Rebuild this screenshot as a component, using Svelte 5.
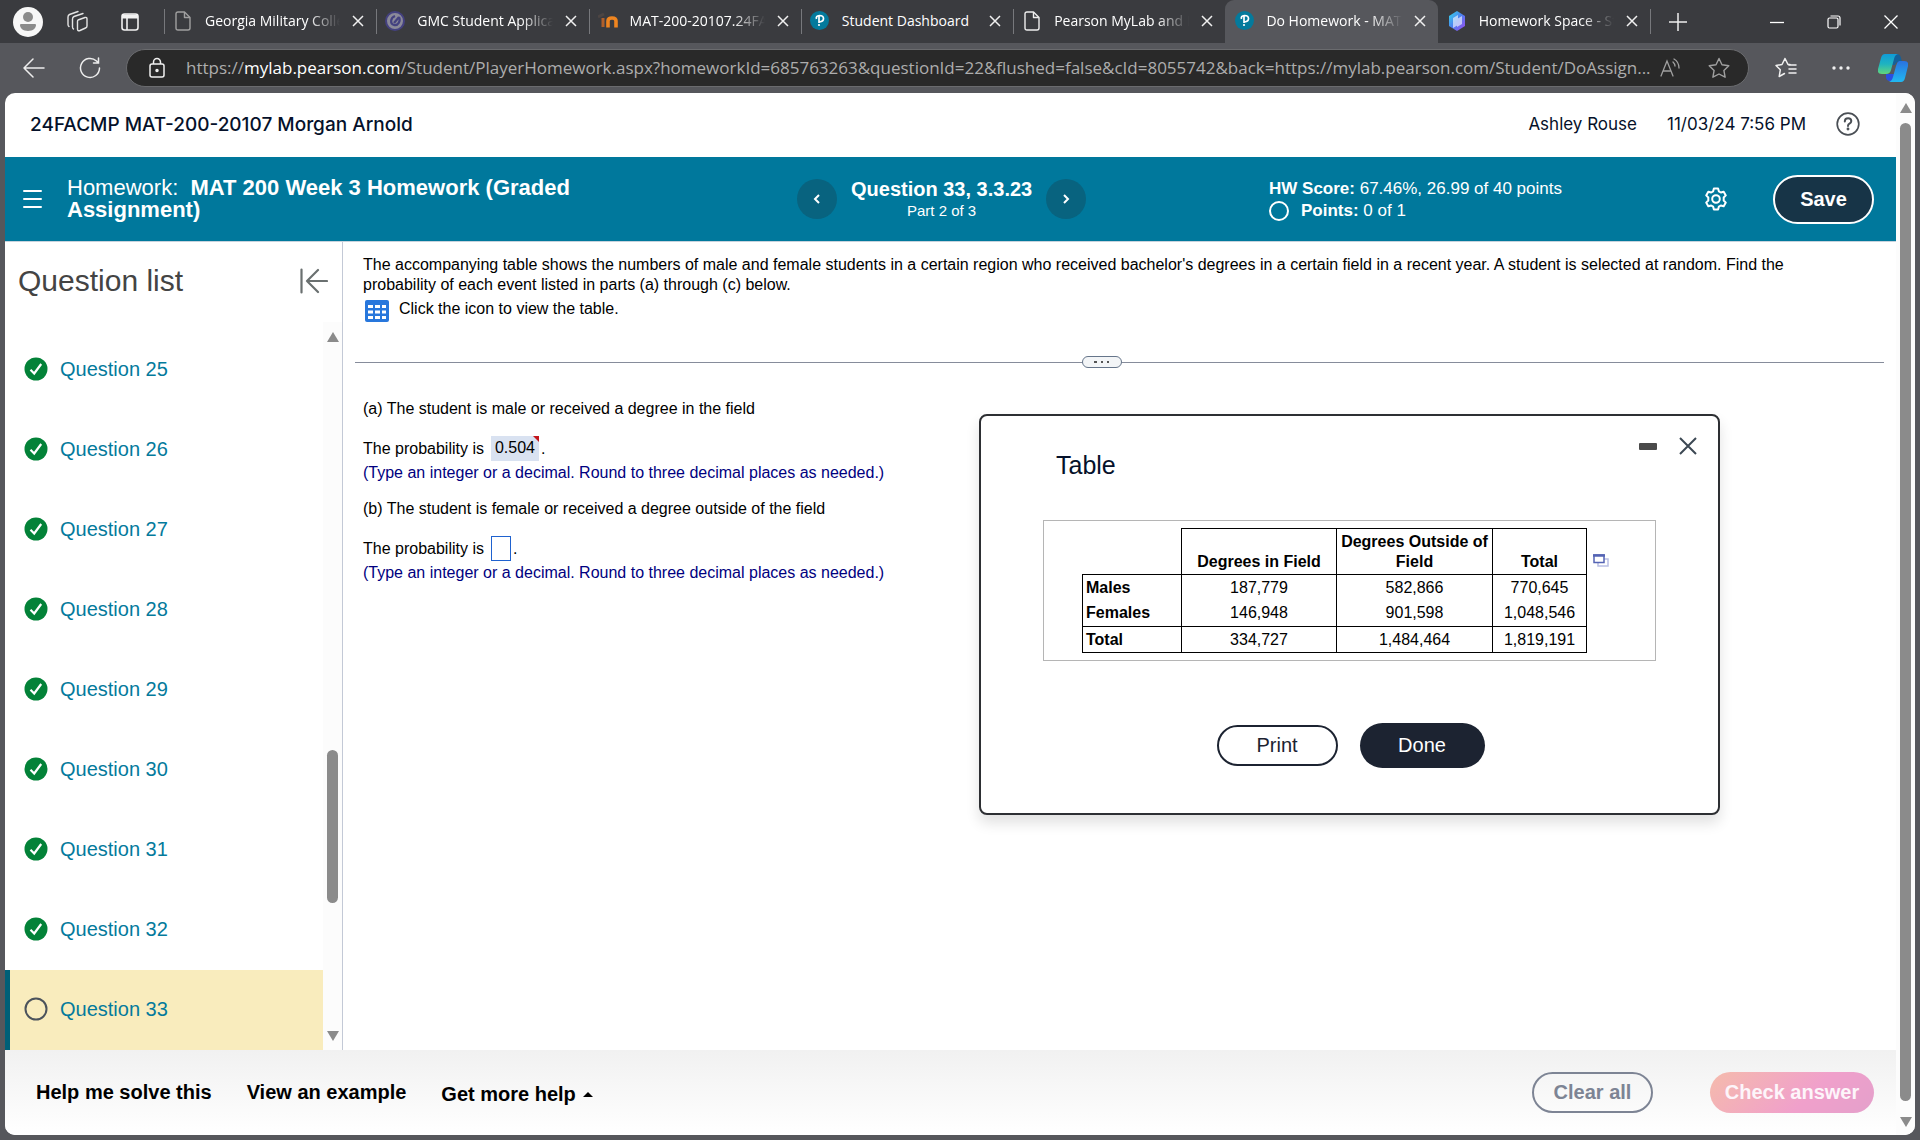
<script>
  const tabs = [
    { title: 'Georgia Military College', icon: 'page', dim: true },
    { title: 'GMC Student Application', icon: 'gmc' },
    { title: 'MAT-200-20107.24FACMP', icon: 'moodle' },
    { title: 'Student Dashboard', icon: 'pearson', whole: true },
    { title: 'Pearson MyLab and Mastering', icon: 'page' },
    { title: 'Do Homework - MAT 200', icon: 'pearson', active: true },
    { title: 'Homework Space - StudyX', icon: 'study' }
  ];

  const questions = [25, 26, 27, 28, 29, 30, 31, 32, 33];
  let current = $state(33);
  let answer = $state('');
  let dialogOpen = $state(true);

  const rows = [
    { label: 'Males', values: ['187,779', '582,866', '770,645'] },
    { label: 'Females', values: ['146,948', '901,598', '1,048,546'] },
    { label: 'Total', values: ['334,727', '1,484,464', '1,819,191'] }
  ];
</script>

<div class="browser">
  <div class="tabbar">
    <div class="tab-tools">
      <button aria-label="Profile">
        <svg width="30" height="30" viewBox="0 0 30 30">
          <circle cx="15" cy="15" r="15" fill="#f7f7f7" />
          <circle cx="15" cy="10" r="5" fill="#8b8b8b" />
          <path d="M8 17h14q1 0 1 1c0 3-3 6-8 6s-8-3-8-6q0-1 1-1z" fill="#8b8b8b" />
        </svg>
      </button>
      <button aria-label="Workspaces">
        <svg width="24" height="24" viewBox="0 0 24 24" fill="none" stroke="#e4e4e4" stroke-width="1.4" stroke-linejoin="round" stroke-linecap="round">
          <path d="M12 10l7-2.500q2-.5 2 1.500v7q0 1.500-1.500 2l-5.500 2.500q-2.500 1-2.500-1.500v-7.500q0-1.200.5-1.500z" />
          <path d="M7.500 19q-1-.5-1-2V9q0-1.800 1.500-2.500L17 3.500" />
          <path d="M3 16.500q-1-.5-1-2V7q0-1.800 1.500-2.500L12 1.500" />
        </svg>
      </button>
      <button aria-label="Tab actions">
        <svg width="20" height="20" viewBox="0 0 20 20" fill="none" stroke="#f2f2f2" stroke-width="1.600">
          <rect x="2" y="2" width="16" height="16" rx="2.500" />
          <path d="M2 4.500h16" stroke-width="4" />
          <path d="M7 6v12" />
        </svg>
      </button>
    </div>

    <div class="tabs">
      {#each tabs as tab}
        <div class="tab" class:active={tab.active}>
          <span class="favicon">
            {#if tab.icon === 'page'}
              <svg width="16" height="20" viewBox="0 0 16 20" fill="none" stroke={tab.dim ? '#a0a0a0' : '#eeeeee'} stroke-width="1.400" stroke-linejoin="round">
                <path d="M3 1h6.500L15 6.500V17q0 2-2 2H3q-2 0-2-2V3q0-2 2-2z" />
                <path d="M9.500 1v5.500H15" />
              </svg>
            {:else if tab.icon === 'gmc'}
              <svg width="20" height="20" viewBox="0 0 20 20" fill="none">
                <circle cx="10" cy="10" r="9" fill="#8b8a99" stroke="#444180" stroke-width="2" />
                <path d="M9 12l5-6M14 6c2 4-1 9-5 8s-4-7 1-9" stroke="#444180" stroke-width="2.200" />
              </svg>
            {:else if tab.icon === 'moodle'}
              <svg width="20" height="16" viewBox="0 0 20 16" fill="none" stroke-width="3">
                <path d="M0 4l6-3" stroke="#4c4543" />
                <path d="M5 5v9" stroke="#b1602a" />
                <path d="M10 14.500V8q0-3 4-3t4 3v6.500" stroke="#ef8520" stroke-width="3.600" />
              </svg>
            {:else if tab.icon === 'pearson'}
              <svg width="19" height="19" viewBox="0 0 19 19" fill="none">
                <circle cx="9.500" cy="9.500" r="9.500" fill="#047a9c" />
                <path d="M9 5v7M6.500 8q-1-3 3-3.500 4 0 4 3T9.500 11" stroke="#fff" stroke-width="1.700" />
                <circle cx="9" cy="14" r="1.100" fill="#fff" />
              </svg>
            {:else}
              <svg width="18" height="20" viewBox="0 0 18 20">
                <defs>
                  <linearGradient id="study" x1="0" y1="0" x2="1" y2="1">
                    <stop offset="0" stop-color="#35dbe8" />
                    <stop offset=".5" stop-color="#4d7df0" />
                    <stop offset="1" stop-color="#a24cf0" />
                  </linearGradient>
                </defs>
                <path d="M9 0l8 5v10l-8 5-8-5V5z" fill="url(#study)" />
                <path d="M5 7l5-3v10l-5 3zM9 8l5-3v8l-5 3z" fill="#fff" opacity=".6" />
              </svg>
            {/if}
          </span>
          <span class="tab-title" class:whole={tab.whole}>{tab.title}</span>
          <button class="tab-close" aria-label="Close tab">
            <svg width="12" height="12" viewBox="0 0 12 12" stroke="#f0f0f0" stroke-width="1.500"><path d="M1 1l10 10M11 1L1 11" /></svg>
          </button>
        </div>
      {/each}
    </div>
    <button class="new-tab" aria-label="New tab">
      <svg width="18" height="18" viewBox="0 0 18 18" stroke="#eee" stroke-width="1.500"><path d="M9 0v18M0 9h18" /></svg>
    </button>

    <div class="window-buttons">
      <button aria-label="Minimize">
        <svg width="14" height="14" viewBox="0 0 14 14" stroke="#fff" stroke-width="1.300"><path d="M0 7.500h14" /></svg>
      </button>
      <button aria-label="Restore">
        <svg width="14" height="14" viewBox="0 0 14 14" fill="none" stroke="#fff" stroke-width="1.200">
          <rect x="1" y="3" width="10" height="10" rx="1.500" />
          <path d="M3.500 1H11q2 0 2 2v7.500" />
        </svg>
      </button>
      <button aria-label="Close window">
        <svg width="14" height="14" viewBox="0 0 14 14" stroke="#fff" stroke-width="1.300"><path d="M.5.5l13 13M13.500.5l-13 13" /></svg>
      </button>
    </div>
  </div>

  <div class="toolbar">
    <button class="nav-btn" aria-label="Back">
      <svg width="22" height="20" viewBox="0 0 22 20" fill="none" stroke="#ededed" stroke-width="1.500" stroke-linecap="round" stroke-linejoin="round"><path d="M21 10H1M10 1L1 10l9 9" /></svg>
    </button>
    <button class="nav-btn" aria-label="Refresh">
      <svg width="22" height="22" viewBox="0 0 22 22" fill="none" stroke="#ededed" stroke-width="1.500" stroke-linecap="round"><path d="M20.500 11a9.500 9.500 0 1 1-3-7l2 2M19.500 1v5h-5" /></svg>
    </button>
    <div class="address">
      <svg width="18" height="21" viewBox="0 0 18 21" fill="none" stroke="#f0f0f0" stroke-width="1.500">
        <rect x="2" y="7" width="14" height="13" rx="2" />
        <path d="M5.500 7V5a3.500 3.500 0 0 1 7 0v2" />
        <circle cx="9" cy="13.500" r="1" fill="#f0f0f0" />
      </svg>
      <span class="url">https://<b>mylab.pearson.com</b>/Student/PlayerHomework.aspx?homeworkId=685763263&questionId=22&flushed=false&cId=8055742&back=https://mylab.pearson.com/Student/DoAssign...</span>
      <button aria-label="Read aloud">
        <svg width="20" height="20" viewBox="0 0 20 20" fill="none" stroke="#a0a0a0" stroke-width="1.300" stroke-linecap="round">
          <path d="M1 18L7 3l6 15M3 13h8M13 4q2 2 2 4M14 1q5 3 5 9" />
        </svg>
      </button>
      <button aria-label="Add to favorites">
        <svg width="22" height="22" viewBox="0 0 22 22" fill="none" stroke="#a0a0a0" stroke-width="1.400" stroke-linejoin="round"><path d="M11 1.500l3 6.200 6.800 1-4.900 4.700 1.200 6.800-6.100-3.200-6.100 3.200 1.200-6.800L1.200 8.700l6.800-1z" /></svg>
      </button>
    </div>
    <button class="side-btn" aria-label="Favorites">
      <svg width="22" height="22" viewBox="0 0 22 22" fill="none" stroke="#f0f0f0" stroke-width="1.500" stroke-linejoin="round" stroke-linecap="round">
        <path d="M15 7.500h-2L10 1.500l-3 6-6 1 4.300 4.300L4.200 19.500 9.500 16.500" />
        <path d="M14 8h7M14 12h7M14 16h7" />
      </svg>
    </button>
    <button class="side-btn" aria-label="Settings and more">
      <svg width="20" height="6" viewBox="0 0 20 6" fill="#f0f0f0"><circle cx="3" cy="3" r="1.700" /><circle cx="10" cy="3" r="1.700" /><circle cx="17" cy="3" r="1.700" /></svg>
    </button>
    <button class="side-btn" aria-label="Copilot">
      <svg width="30" height="28" viewBox="0 0 30 28">
        <defs>
          <linearGradient id="copA" x1="0" y1="0" x2="0" y2="1">
            <stop offset="0" stop-color="#109bd8" /><stop offset=".5" stop-color="#1fb3c0" /><stop offset="1" stop-color="#62d67c" />
          </linearGradient>
          <linearGradient id="copB" x1="0" y1="0" x2="0" y2="1">
            <stop offset="0" stop-color="#2a72e0" /><stop offset="1" stop-color="#21b8f0" />
          </linearGradient>
        </defs>
        <path d="M14 0h5q3 0 4 4l1 4q-6-1-7 3h-5z" fill="#14609a" />
        <path d="M8 20h9l-2 7h-4q-2 0-3-3z" fill="#2a4fe0" />
        <path d="M7 0h14q-4 0-5 5l-3 11q-1 4-5 4H4q-5 0-4-5L3 4q1-4 4-4z" fill="url(#copA)" />
        <path d="M21 7h5q5 0 4 5l-3 12q-1 4-4 4H11q3-1 4-5l3-11q1-4 3-5z" fill="url(#copB)" />
      </svg>
    </button>
  </div>

  <div class="viewport">
    <div class="page">
      <header class="course">
        <span class="course-name">24FACMP MAT-200-20107 Morgan Arnold</span>
        <span class="user">Ashley Rouse</span>
        <span class="date">11/03/24 7:56 PM</span>
        <button aria-label="Help">
          <svg width="24" height="24" viewBox="0 0 24 24" fill="none" stroke="#4a4f55" stroke-width="1.700" stroke-linecap="round">
            <circle cx="12" cy="12" r="10.800" />
            <path d="M8.800 9.500q0-3.300 3.300-3.300 3.200 0 3.200 2.900 0 1.600-1.800 2.600-1.500.8-1.500 2.300" stroke-width="2" />
            <circle cx="12" cy="17" r=".6" fill="#4a4f55" />
          </svg>
        </button>
      </header>

      <div class="banner">
        <div class="homework">
          <button aria-label="Menu">
            <svg width="19" height="18" viewBox="0 0 19 18" stroke="#fff" stroke-width="2" stroke-linecap="round"><path d="M1 1h17M1 9h17M1 17h17" /></svg>
          </button>
          <h1>Homework:&nbsp; <b>MAT 200 Week 3 Homework (Graded Assignment)</b></h1>
        </div>
        <div class="pager">
          <button aria-label="Previous question">
            <svg width="8" height="10" viewBox="0 0 8 10" fill="none" stroke="#fff" stroke-width="2"><path d="M6 1L2 5l4 4" /></svg>
          </button>
          <div class="pager-text">
            <b>Question 33, 3.3.23</b>
            <span>Part 2 of 3</span>
          </div>
          <button aria-label="Next question">
            <svg width="8" height="10" viewBox="0 0 8 10" fill="none" stroke="#fff" stroke-width="2"><path d="M2 1l4 4-4 4" /></svg>
          </button>
        </div>
        <div class="status">
          <div class="score">
            <div><b>HW Score:</b> 67.46%, 26.99 of 40 points</div>
            <div class="points"><i></i><span><b>Points:</b> 0 of 1</span></div>
          </div>
          <button class="gear" aria-label="Settings">
            <svg width="24" height="24" viewBox="0 0 24 24" fill="none" stroke="#fff" stroke-width="2" stroke-linejoin="round">
              <path d="M9.900 1.500h4.200l.8 2.900 1.900 1.100 2.900-.8 2.100 3.700-2.100 2.100v3l2.100 2.100-2.100 3.700-2.900-.8-1.900 1.100-.8 2.900H9.900l-.8-2.900-1.900-1.100-2.900.8-2.100-3.700 2.100-2.100v-3L2.200 8.400l2.100-3.700 2.900.8 1.900-1.100z" />
              <circle cx="12" cy="12" r="3.800" />
            </svg>
          </button>
          <button class="save">Save</button>
        </div>
      </div>

      <div class="body">
        <aside>
          <div class="list-head">
            <h2>Question list</h2>
            <button aria-label="Collapse question list">
              <svg width="28" height="26" viewBox="0 0 28 26" fill="none" stroke="#6a7070" stroke-width="2.200" stroke-linecap="round" stroke-linejoin="round"><path d="M1.500 1.500v23M27 13H7M18 2L7 13l11 11" /></svg>
            </button>
          </div>
          <div class="list">
            <ul>
              {#each questions as q}
                <li class:current={q === current}>
                  {#if q === 33}
                    <svg width="24" height="24" viewBox="0 0 24 24"><circle cx="12" cy="12" r="10.500" fill="none" stroke="#4c535c" stroke-width="2" /></svg>
                  {:else}
                    <svg width="24" height="24" viewBox="0 0 24 24">
                      <circle cx="12" cy="12" r="11.500" fill="#038238" />
                      <path d="M6.500 12.800l3.700 3.700 7-9.500" fill="none" stroke="#fff" stroke-width="2.200" />
                    </svg>
                  {/if}
                  <a href="#q{q}" onclick={() => (current = q)}>Question {q}</a>
                </li>
              {/each}
            </ul>
            <div class="scroll side-scroll">
              <svg width="12" height="10" viewBox="0 0 12 10"><path d="M6 0l6 10H0z" fill="#8b8b8b" /></svg>
              <div class="track"><div class="thumb"></div></div>
              <svg width="12" height="10" viewBox="0 0 12 10"><path d="M6 10L0 0h12z" fill="#8b8b8b" /></svg>
            </div>
          </div>
        </aside>

        <main>
          <section class="intro">
            <p>The accompanying table shows the numbers of male and female students in a certain region who received bachelor's degrees in a certain field in a recent year. A student is selected at random. Find the probability of each event listed in parts (a) through (c) below.</p>
            <button class="view-table" onclick={() => (dialogOpen = true)}>
              <svg width="24" height="22" viewBox="0 0 24 22">
                <rect width="24" height="22" rx="2" fill="#2877dc" />
                <path d="M3 5h5v3H3zM10 5h5v3h-5zM17 5h4v3h-4zM3 10.500h5v3H3zM10 10.500h5v3h-5zM17 10.500h4v3h-4zM3 16h5v3H3zM10 16h5v3h-5zM17 16h4v3h-4z" fill="#fff" />
              </svg>
              <span>Click the icon to view the table.</span>
            </button>
          </section>

          <div class="split">
            <button aria-label="Resize panes">
              <svg width="16" height="2" viewBox="0 0 16 2" fill="#555"><path d="M0 0h3v2H0zM7 0h2v2H7zM13 0h2v2h-2z" /></svg>
            </button>
          </div>

          <section class="parts">
            <p>(a) The student is male or received a degree in the field</p>
            <div class="answer">The probability is <span class="given">0.504</span>.</div>
            <p class="hint">(Type an integer or a decimal. Round to three decimal places as needed.)</p>
            <p class="next">(b) The student is female or received a degree outside of the field</p>
            <div class="answer"><label for="partb">The probability is</label> <input id="partb" bind:value={answer} />.</div>
            <p class="hint">(Type an integer or a decimal. Round to three decimal places as needed.)</p>
          </section>
        </main>
      </div>

      <footer>
        <button class="link">Help me solve this</button>
        <button class="link">View an example</button>
        <button class="link more">Get more help
          <svg width="10" height="5" viewBox="0 0 10 5"><path d="M5 0l5 5H0z" /></svg>
        </button>
        <button class="clear">Clear all</button>
        <button class="check">Check answer</button>
      </footer>
    </div>

    <div class="scroll page-scroll">
      <svg width="12" height="10" viewBox="0 0 12 10"><path d="M6 0l6 10H0z" fill="#8b8b8b" /></svg>
      <div class="track"><div class="thumb"></div></div>
      <svg width="12" height="10" viewBox="0 0 12 10"><path d="M6 10L0 0h12z" fill="#8b8b8b" /></svg>
    </div>
  </div>

  {#if dialogOpen}
    <div class="dialog" role="dialog" aria-labelledby="dialog-title">
      <div class="dialog-tools">
        <button aria-label="Minimize dialog">
          <svg width="18" height="7" viewBox="0 0 18 7"><rect width="18" height="7" rx="1" fill="#4a4a4a" /></svg>
        </button>
        <button aria-label="Close dialog" onclick={() => (dialogOpen = false)}>
          <svg width="18" height="18" viewBox="0 0 18 18" stroke="#3c4853" stroke-width="2"><path d="M1 1l16 16M17 1L1 17" /></svg>
        </button>
      </div>
      <h3 id="dialog-title">Table</h3>
      <div class="table-box">
        <table>
          <thead>
            <tr>
              <td class="corner"></td>
              <th>Degrees in Field</th>
              <th class="wide">Degrees Outside of Field</th>
              <th>Total</th>
            </tr>
          </thead>
          <tbody>
            {#each rows as row}
              <tr>
                <th scope="row">{row.label}</th>
                {#each row.values as value}
                  <td>{value}</td>
                {/each}
              </tr>
            {/each}
          </tbody>
        </table>
        <button class="copy" aria-label="Copy table">
          <svg width="16" height="13" viewBox="0 0 16 13" fill="none">
            <rect x="5" y="5" width="10" height="7" stroke="#b9bfe4" stroke-width="1.500" />
            <rect x="1" y="1" width="10" height="7.500" fill="#fff" stroke="#5564b4" stroke-width="1.500" />
            <path d="M0 1.500h12" stroke="#5564b4" stroke-width="2.500" />
          </svg>
        </button>
      </div>
      <div class="dialog-actions">
        <button class="print">Print</button>
        <button class="done">Done</button>
      </div>
    </div>
  {/if}
</div>

<style>
  :global(body) { margin: 0; }
  .browser {
    position: relative;
    display: flex;
    flex-direction: column;
    min-height: 100vh;
    background: #56575c;
    font-family: Arial, "Liberation Sans", sans-serif;
    font-size: 16px;
    color: #000;
  }
  *, *::before { box-sizing: border-box; }
  button { padding: 0; border: 0; background: none; color: inherit; font: inherit; cursor: pointer; }
  svg { display: block; flex: none; }
  h1, h2, h3, p, ul { margin: 0; padding: 0; font-weight: normal; }

  /* tab strip */
  .tabbar { display: flex; height: 43px; background: #3a3b3f; font-family: "Segoe UI", "Open Sans", sans-serif; }
  .tab-tools { display: flex; align-items: center; width: 164px; padding-left: 13px; }
  .tab-tools button { margin-right: 23px; }
  .tab-tools button:nth-child(2) { margin-right: 30px; }
  .tabs { display: flex; flex: 0 1 1486px; min-width: 0; }
  .tab { position: relative; display: flex; align-items: center; flex: 1 1 0; min-width: 0; padding: 0 12px 2px 9px; color: #fff; font-size: 14px; }
  .tab::before { content: ''; position: absolute; left: 0; top: 9px; width: 1px; height: 25px; background: #77787c; }
  .tab.active { background: #56575c; border-radius: 9px 9px 0 0; }
  .tab.active::before, .tab.active + .tab::before { display: none; }
  .favicon { display: flex; justify-content: center; width: 20px; margin-right: 12px; }
  .tab-title { flex: 1; overflow: hidden; white-space: nowrap; mask-image: linear-gradient(to right, #000 calc(100% - 32px), transparent); }
  .tab-title.whole { mask-image: none; }
  .tab-close { margin-left: 12px; }
  .new-tab { display: flex; align-items: center; padding-left: 18px; border-left: 1px solid #77787c; height: 25px; margin-top: 9px; }
  .window-buttons { display: flex; align-items: center; gap: 43px; margin-left: auto; padding-right: 22px; }

  .toolbar { display: flex; align-items: center; height: 50px; padding: 0 12px 1px 23px; }
  .nav-btn { margin-right: 34px; }
  .nav-btn + .nav-btn { margin-right: 25px; }
  .address {
    display: flex; align-items: center; flex: 1; min-width: 0; height: 38px;
    padding: 0 18px 0 21px; border: 1px solid #6a6b6e; border-radius: 19px; background: #292929;
  }
  .url {
    flex: 1; min-width: 0; margin: 0 6px 0 20px; overflow: hidden; white-space: nowrap; text-overflow: ellipsis;
    color: #adadad; font: 17px "Segoe UI", "Open Sans", sans-serif;
  }
  .url b { color: #fff; font-weight: normal; }
  .address button + button { margin-left: 28px; }
  .side-btn { margin-left: 26px; }
  .side-btn + .side-btn { margin-left: 34px; }
  .side-btn:last-child { margin-left: 27px; }

  /* page */
  .viewport { display: flex; flex: 1; margin: 0 5px 5px; overflow: hidden; border-radius: 10px; background: #fff; }
  .page { display: flex; flex-direction: column; flex: 1; min-width: 0; }
  .scroll { display: flex; flex-direction: column; align-items: center; background: #fcfcfc; }
  .scroll .track { flex: 1; width: 11px; }
  .thumb { width: 11px; border-radius: 6px; background: #8b8b8b; }
  .page-scroll { width: 19px; padding: 10px 0 8px; }
  .page-scroll .track { margin: 10px 0 16px; }
  .page-scroll .thumb { height: 100%; }

  .course { display: flex; align-items: center; height: 64px; padding: 0 36px 2px 25px; color: #05112a; font: 18px Inter, sans-serif; }
  .course-name { flex: 1; font-size: 19px; font-weight: 500; }
  .user, .date { font-size: 17px; }
  .date { margin: 0 30px; }

  .banner {
    display: grid; grid-template-columns: 792fr 472fr 627fr; align-items: center;
    height: 85px; border-bottom: 1px solid #c7d3dd; background: #00789c; color: #fff;
  }
  .homework { display: flex; align-items: center; padding-left: 18px; }
  h1 { max-width: 540px; margin-left: 25px; font-size: 22px; line-height: 22px; }
  .pager { display: flex; align-items: center; }
  .pager button { display: flex; align-items: center; justify-content: center; width: 40px; height: 40px; border-radius: 50%; background: #08637f; }
  .pager-text { display: flex; flex-direction: column; margin: 0 14px; text-align: center; font-size: 20px; line-height: 24px; }
  .pager-text span { font-size: 15px; line-height: 20px; }
  .status { display: flex; align-items: center; padding-right: 22px; }
  .score { flex: 1; padding-top: 2px; font-size: 17px; line-height: 22px; }
  .points { display: flex; align-items: center; gap: 12px; }
  .points i { width: 20px; height: 20px; border: 2px solid #fff; border-radius: 50%; }
  .save { width: 101px; height: 49px; margin-left: 45px; border: 2px solid #fff; border-radius: 25px; background: #173447; font-size: 20px; font-weight: bold; }

  .body { display: flex; flex: 1; }
  aside { display: flex; flex-direction: column; width: 338px; border-right: 1px solid #c3c9d6; }
  .list-head { display: flex; align-items: center; justify-content: space-between; height: 80px; padding: 0 14px 2px 13px; }
  h2 { color: #444; font-size: 30px; line-height: 36px; }
  .list { display: flex; flex: 1; }
  ul { flex: 1; padding-top: 8px; list-style: none; }
  li { display: flex; align-items: center; gap: 12px; height: 80px; padding: 0 0 2px 19px; font-size: 20px; }
  li.current { padding-left: 14px; border-left: 5px solid #005f77; background: #f9ecbd; }
  li a { color: #047a9c; text-decoration: none; }
  .side-scroll { width: 19px; padding: 10px 0 9px; }
  .side-scroll .track { display: flex; flex-direction: column; padding: 408px 0 128px; }
  .side-scroll .thumb { flex: 1; }

  main { flex: 1; min-width: 0; padding: 13px 12px 0; }
  .intro { padding: 0 60px 0 8px; line-height: 20px; }
  .view-table { display: flex; align-items: flex-start; gap: 10px; margin-top: 4px; padding-left: 2px; }
  .view-table svg { margin-top: 1px; }
  .split { display: flex; justify-content: center; margin-top: 34px; background: linear-gradient(#868c9b, #868c9b) center / 100% 1px no-repeat; }
  .split button { display: flex; align-items: center; justify-content: center; width: 40px; height: 12px; margin-right: 36px; border: 1px solid #66758a; border-radius: 6px; background: #f3f5f7; }
  .parts { padding: 31px 8px; line-height: 20px; }
  .answer { display: flex; align-items: center; height: 25px; margin: 17px 0 2px; }
  .given { position: relative; width: 48px; height: 25px; margin: 0 2px 0 7px; background: #d9e2f1; line-height: 24px; text-align: center; }
  .given::before { content: ''; position: absolute; top: 0; right: 0; border-top: 6px solid #c4161c; border-left: 6px solid transparent; }
  .answer input { width: 20px; height: 25px; margin: 0 2px 0 7px; padding: 0; border: 1px solid #1f62cf; font: inherit; }
  .hint { color: #000080; }
  .next { margin-top: 16px; }

  footer { display: flex; align-items: center; height: 85px; padding: 0 22px 0 31px; background: linear-gradient(#f1f1f1, #fff); font-size: 20px; font-weight: bold; }
  .link { margin-right: 35px; }
  .more { display: flex; align-items: center; gap: 7px; margin-right: auto; padding-top: 3px; }
  .clear { width: 121px; height: 41px; border: 2px solid #7d8494; border-radius: 21px; color: #7d8494; }
  .check { width: 164px; height: 41px; margin-left: 57px; border-radius: 21px; background: linear-gradient(135deg, #f5bbac, #f0a0cb 60%, #e4a0cb); color: #fdf5fa; }

  /* floating table window */
  .dialog {
    position: absolute; left: 979px; top: 414px; display: flex; flex-direction: column;
    width: 741px; height: 401px; padding: 0 62px; border: 2px solid #2d2f33; border-radius: 8px;
    background: #fff; box-shadow: 0 8px 14px rgba(0, 0, 0, .12);
  }
  .dialog-tools { position: absolute; top: 21px; right: 21px; display: flex; align-items: center; gap: 22px; }
  h3 { margin: 36px 0 41px 13px; color: #05112a; font-size: 25px; line-height: 27px; }
  .table-box { display: flex; align-items: flex-start; padding: 7px 38px; border: 1px solid #b5b5b5; }
  table { border-collapse: collapse; line-height: 20px; }
  thead th { width: 155px; height: 46px; padding: 2px 2px; border: 1px solid #000; vertical-align: bottom; }
  thead th.wide { width: 156px; }
  thead th:last-child { width: 94px; }
  .corner { width: 99px; border-bottom: 1px solid #000; }
  tbody th, tbody td { height: 26px; padding: 0; border: solid #000; border-width: 0 1px; text-align: center; }
  tbody th { padding-left: 3px; text-align: left; }
  tbody tr:last-child > * { border-width: 1px; }
  .copy { margin: 26px 0 0 6px; }
  .dialog-actions { display: flex; align-items: center; justify-content: center; gap: 22px; margin-top: 62px; padding-left: 2px; font-size: 20px; }
  .print { width: 121px; height: 41px; border: 2px solid #1c2331; border-radius: 21px; color: #1c2331; }
  .done { width: 125px; height: 45px; border-radius: 23px; background: #1c2331; color: #fff; }
</style>
